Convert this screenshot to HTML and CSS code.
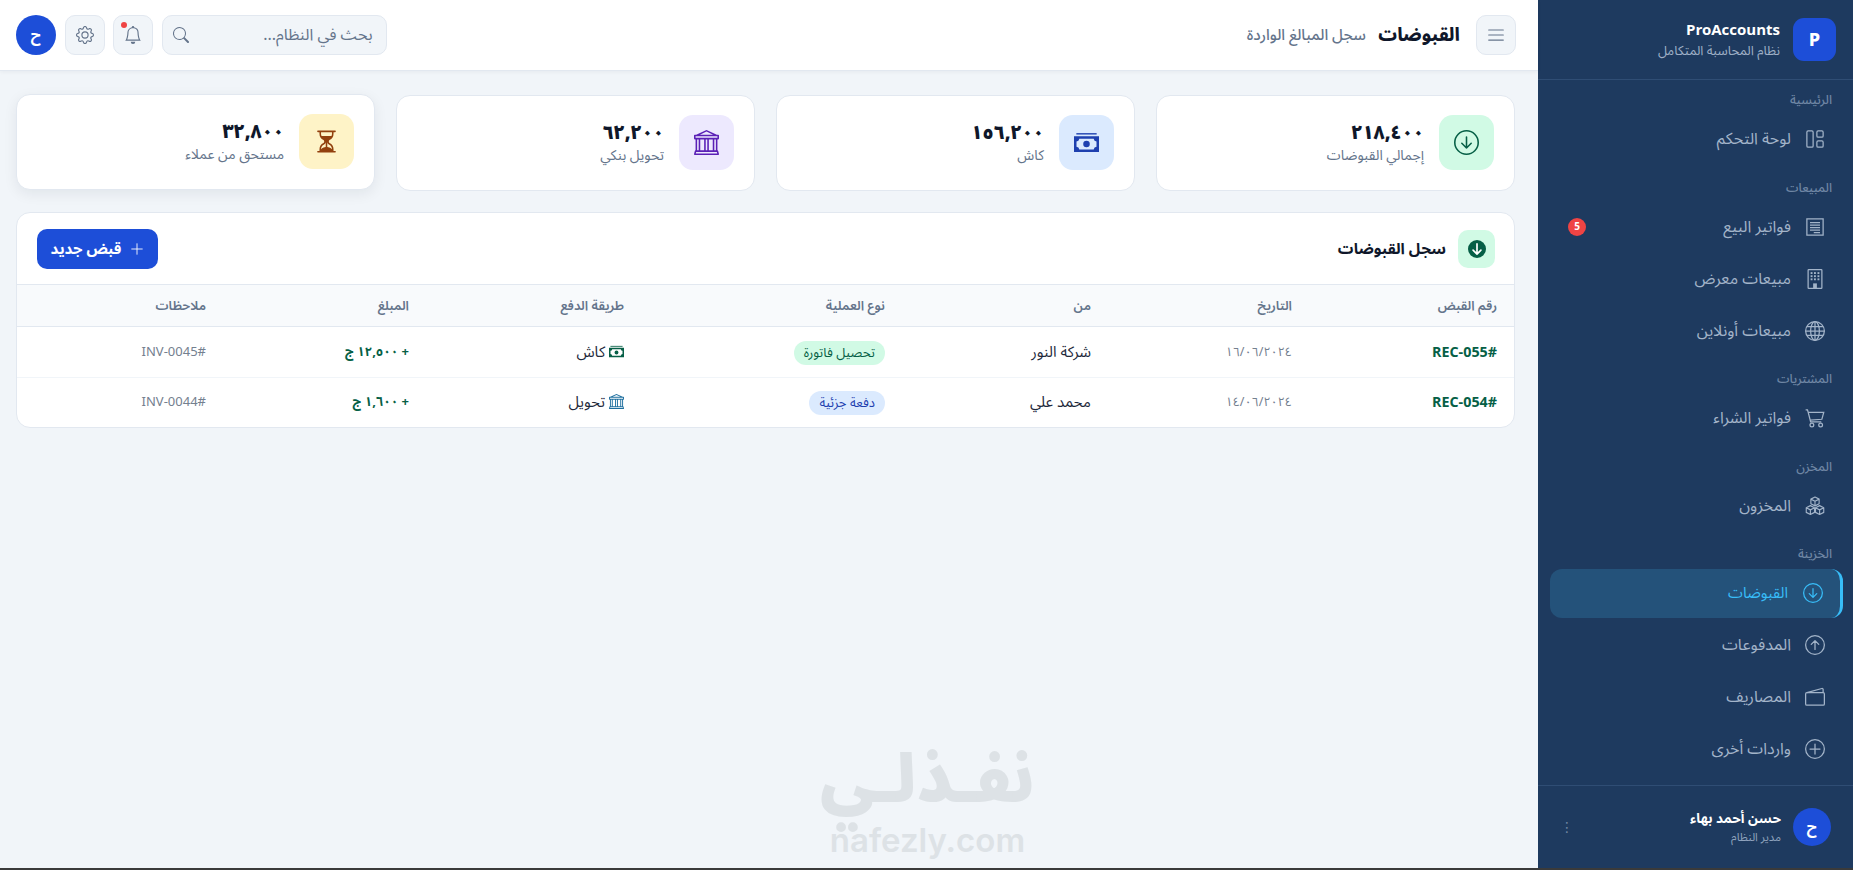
FILE: index.html
```html
<!DOCTYPE html>
<html lang="ar" dir="rtl">
<head>
<meta charset="utf-8">
<title>القبوضات</title>
<link rel="stylesheet" href="styles.css">
</head>
<body>
<svg class="sprite" xmlns="http://www.w3.org/2000/svg">
  <symbol id="i-grid" viewBox="0 0 16 16"><g fill="none" stroke="currentColor"><rect x="1.5" y="1.5" width="5" height="13" rx="1"/><rect x="9.5" y="1.5" width="5" height="5" rx="1"/><rect x="9.5" y="9.5" width="5" height="5" rx="1"/></g></symbol>
  <symbol id="i-receipt" viewBox="0 0 16 16"><g fill="none" stroke="currentColor"><path d="M1.5 1.5h13v13h-13z"/><path d="M4 4.5h8M4 6.5h8M4 8.5h8M4 10.5h8M7 12.5h5" stroke-width=".9"/></g></symbol>
  <symbol id="i-building" viewBox="0 0 16 16"><g fill="none" stroke="currentColor"><rect x="2.5" y=".5" width="11" height="15" rx=".5"/></g><g fill="currentColor"><rect x="4.5" y="2.5" width="1.5" height="1.5"/><rect x="7.2" y="2.5" width="1.5" height="1.5"/><rect x="10" y="2.5" width="1.5" height="1.5"/><rect x="4.5" y="5" width="1.5" height="1.5"/><rect x="7.2" y="5" width="1.5" height="1.5"/><rect x="10" y="5" width="1.5" height="1.5"/><rect x="4.5" y="7.5" width="1.5" height="1.5"/><rect x="7.2" y="7.5" width="1.5" height="1.5"/><rect x="10" y="7.5" width="1.5" height="1.5"/><rect x="6.5" y="11.5" width="3" height="4"/></g></symbol>
  <symbol id="i-globe" viewBox="0 0 16 16"><g fill="none" stroke="currentColor"><circle cx="8" cy="8" r="7.5"/><ellipse cx="8" cy="8" rx="3.5" ry="7.5"/><path d="M8 .5v15M.5 8h15M1.6 4.5h12.8M1.6 11.5h12.8"/></g></symbol>
  <symbol id="i-cart" viewBox="0 0 16 16"><g fill="none" stroke="currentColor"><path d="M.5 1.5H2l.6 2.2L4.5 11h8.5M2.6 3.5H15l-1.5 5.5-9.2.7"/><circle cx="5.5" cy="13.5" r="1.5"/><circle cx="12.5" cy="13.5" r="1.5"/></g></symbol>
  <symbol id="i-boxes" viewBox="0 0 16 16"><g fill="none" stroke="currentColor" stroke-width=".9" stroke-linejoin="round"><path d="M8 .8l3.3 1.7v3.7L8 7.9 4.7 6.2V2.5zM4.7 2.5L8 4.2l3.3-1.7M8 4.2v3.7"/><path d="M4.3 7.7l3.3 1.7v3.7l-3.3 1.7L1 13.1V9.4zM1 9.4l3.3 1.7 3.3-1.7M4.3 11.1v3.7"/><path d="M11.7 7.7L15 9.4v3.7l-3.3 1.7-3.3-1.7V9.4zM8.4 9.4l3.3 1.7L15 9.4M11.7 11.1v3.7"/></g></symbol>
  <symbol id="i-down" viewBox="0 0 16 16"><g fill="none" stroke="currentColor"><circle cx="8" cy="8" r="7.5"/><path d="M8 4.5v7M5 8.5l3 3 3-3" stroke-linecap="round" stroke-linejoin="round"/></g></symbol>
  <symbol id="i-up" viewBox="0 0 16 16"><g fill="none" stroke="currentColor"><circle cx="8" cy="8" r="7.5"/><path d="M8 11.5v-7M5 7.5l3-3 3 3" stroke-linecap="round" stroke-linejoin="round"/></g></symbol>
  <symbol id="i-wallet" viewBox="0 0 16 16"><g fill="none" stroke="currentColor" stroke-linejoin="round"><rect x=".5" y="4.5" width="15" height="10" rx="1"/><path d="M1.5 4.5L13.5 1.2c.5-.1 1 .2 1 .8v2.5"/></g></symbol>
  <symbol id="i-plusc" viewBox="0 0 16 16"><g fill="none" stroke="currentColor" stroke-linecap="round"><circle cx="8" cy="8" r="7.5"/><path d="M8 4v8M4 8h8"/></g></symbol>
  <symbol id="i-plus" viewBox="0 0 16 16"><path d="M8 2v12M2 8h12" fill="none" stroke="currentColor" stroke-linecap="round"/></symbol>
  <symbol id="i-list" viewBox="0 0 16 16"><path d="M1.5 3.5h13M1.5 8h13M1.5 12.5h13" fill="none" stroke="currentColor" stroke-linecap="round"/></symbol>
  <symbol id="i-search" viewBox="0 0 16 16"><path fill="currentColor" d="M11.742 10.344a6.5 6.5 0 1 0-1.397 1.398h-.001q.044.06.098.115l3.85 3.85a1 1 0 0 0 1.415-1.414l-3.85-3.85a1 1 0 0 0-.115-.1zM12 6.5a5.5 5.5 0 1 1-11 0 5.5 5.5 0 0 1 11 0"/></symbol>
  <symbol id="i-bell" viewBox="0 0 16 16"><path fill="currentColor" d="M8 16a2 2 0 0 0 2-2H6a2 2 0 0 0 2 2M8 1.918l-.797.161A4 4 0 0 0 4 6c0 .628-.134 2.197-.459 3.742-.16.767-.376 1.566-.663 2.258h10.244c-.287-.692-.502-1.49-.663-2.258C12.134 8.197 12 6.628 12 6a4 4 0 0 0-3.203-3.92zM14.22 12c.223.447.481.801.78 1H1c.299-.199.557-.553.78-1C2.68 10.2 3 6.88 3 6c0-2.42 1.72-4.44 4.005-4.901a1 1 0 1 1 1.99 0A5 5 0 0 1 13 6c0 .88.32 4.2 1.22 6"/></symbol>
  <symbol id="i-gear" viewBox="0 0 16 16"><path fill="currentColor" d="M8 4.754a3.246 3.246 0 1 0 0 6.492 3.246 3.246 0 0 0 0-6.492M5.754 8a2.246 2.246 0 1 1 4.492 0 2.246 2.246 0 0 1-4.492 0"/><path fill="currentColor" d="M9.796 1.343c-.527-1.79-3.065-1.79-3.592 0l-.094.319a.873.873 0 0 1-1.255.52l-.292-.16c-1.64-.892-3.433.902-2.54 2.541l.159.292a.873.873 0 0 1-.52 1.255l-.319.094c-1.79.527-1.79 3.065 0 3.592l.319.094a.873.873 0 0 1 .52 1.255l-.16.292c-.892 1.64.901 3.434 2.541 2.54l.292-.159a.873.873 0 0 1 1.255.52l.094.319c.527 1.79 3.065 1.79 3.592 0l.094-.319a.873.873 0 0 1 1.255-.52l.292.16c1.64.893 3.434-.902 2.54-2.541l-.159-.292a.873.873 0 0 1 .52-1.255l.319-.094c1.79-.527 1.79-3.065 0-3.592l-.319-.094a.873.873 0 0 1-.52-1.255l.16-.292c.893-1.64-.902-3.433-2.541-2.54l-.292.159a.873.873 0 0 1-1.255-.52zm-2.633.283c.246-.835 1.428-.835 1.674 0l.094.319a1.873 1.873 0 0 0 2.693 1.115l.291-.16c.764-.415 1.6.42 1.184 1.185l-.159.292a1.873 1.873 0 0 0 1.116 2.692l.318.094c.835.246.835 1.428 0 1.674l-.319.094a1.873 1.873 0 0 0-1.115 2.693l.16.291c.415.764-.42 1.6-1.185 1.184l-.291-.159a1.873 1.873 0 0 0-2.693 1.116l-.094.318c-.246.835-1.428.835-1.674 0l-.094-.319a1.873 1.873 0 0 0-2.692-1.115l-.292.16c-.764.415-1.6-.42-1.184-1.185l.159-.291A1.873 1.873 0 0 0 1.945 8.93l-.319-.094c-.835-.246-.835-1.428 0-1.674l.319-.094A1.873 1.873 0 0 0 3.06 4.377l-.16-.292c-.415-.764.42-1.6 1.185-1.184l.292.159a1.873 1.873 0 0 0 2.692-1.115z"/></symbol>
  <symbol id="i-bank" viewBox="0 0 16 16"><path fill="currentColor" d="m8 0 6.61 3h.89a.5.5 0 0 1 .5.5v2a.5.5 0 0 1-.5.5H15v7a.5.5 0 0 1 .485.38l.5 2a.498.498 0 0 1-.485.62H.5a.498.498 0 0 1-.485-.62l.5-2A.5.5 0 0 1 1 13V6H.5a.5.5 0 0 1-.5-.5v-2A.5.5 0 0 1 .5 3h.89zM3.777 3h8.447L8 1zM2 6v7h1V6zm2 0v7h2.5V6zm3.5 0v7h1V6zm2 0v7H12V6zM13 6v7h1V6zm2-1V4H1v1zm-.39 9H1.39l-.25 1h13.72z"/></symbol>
  <symbol id="i-cash" viewBox="0 0 16 16"><path fill="currentColor" d="M1.5 2h13v.9h-13z"/><path fill="currentColor" fill-rule="evenodd" d="M0 4h16v10H0zM1.6 7.3v3.4a2 2 0 0 1 1.8 1.7h9.2a2 2 0 0 1 1.8-1.7V7.3a2 2 0 0 1-1.8-1.7H3.4a2 2 0 0 1-1.8 1.700zM8 6.900a2.100 2.100 0 1 1 0 4.200 2.100 2.100 0 0 1 0-4.200z"/></symbol>
  <symbol id="i-hour" viewBox="0 0 16 16"><path fill="currentColor" d="M2.5 15a.5.5 0 1 1 0-1h1v-1a4.5 4.5 0 0 1 2.557-4.06c.29-.139.443-.377.443-.59v-.7c0-.213-.154-.451-.443-.59A4.5 4.5 0 0 1 3.5 3V2h-1a.5.5 0 0 1 0-1h11a.5.5 0 0 1 0 1h-1v1a4.5 4.5 0 0 1-2.557 4.06c-.29.139-.443.377-.443.59v.7c0 .213.154.451.443.59A4.5 4.5 0 0 1 12.5 13v1h1a.5.5 0 0 1 0 1zm2-13v1c0 .537.12 1.045.337 1.5h6.326c.216-.455.337-.963.337-1.5V2zm3 6.35c0 .701-.478 1.236-1.011 1.492A3.5 3.5 0 0 0 4.5 13s.866-1.299 3-1.48zm1 0v3.17c2.134.181 3 1.48 3 1.48a3.5 3.5 0 0 0-1.989-3.158C8.978 9.586 8.5 9.052 8.5 8.351z"/></symbol>
  <symbol id="i-arrow" viewBox="0 0 16 16"><path d="M8 3.5v9M4.5 9L8 12.5 11.500 9" fill="none" stroke="currentColor" stroke-width="1.5" stroke-linecap="round" stroke-linejoin="round"/></symbol>
</svg>

<div class="app">
  <aside class="sidebar">
    <div class="brand">
      <div class="brand-logo">P</div>
      <div class="brand-text">
        <div class="brand-name">ProAccounts</div>
        <div class="brand-sub">نظام المحاسبة المتكامل</div>
      </div>
    </div>
    <nav class="nav">
      <div class="nav-label">الرئيسية</div>
      <a class="nav-item"><svg class="nav-icon"><use href="#i-grid"/></svg><span>لوحة التحكم</span></a>
      <div class="nav-label">المبيعات</div>
      <a class="nav-item"><svg class="nav-icon"><use href="#i-receipt"/></svg><span>فواتير البيع</span><b class="nav-badge">5</b></a>
      <a class="nav-item"><svg class="nav-icon"><use href="#i-building"/></svg><span>مبيعات معرض</span></a>
      <a class="nav-item"><svg class="nav-icon"><use href="#i-globe"/></svg><span>مبيعات أونلاين</span></a>
      <div class="nav-label">المشتريات</div>
      <a class="nav-item"><svg class="nav-icon"><use href="#i-cart"/></svg><span>فواتير الشراء</span></a>
      <div class="nav-label">المخزن</div>
      <a class="nav-item"><svg class="nav-icon"><use href="#i-boxes"/></svg><span>المخزون</span></a>
      <div class="nav-label">الخزينة</div>
      <a class="nav-item active"><svg class="nav-icon"><use href="#i-down"/></svg><span>القبوضات</span></a>
      <a class="nav-item"><svg class="nav-icon"><use href="#i-up"/></svg><span>المدفوعات</span></a>
      <a class="nav-item"><svg class="nav-icon"><use href="#i-wallet"/></svg><span>المصاريف</span></a>
      <a class="nav-item"><svg class="nav-icon"><use href="#i-plusc"/></svg><span>واردات أخرى</span></a>
    </nav>
    <div class="user">
      <div class="user-avatar">ح</div>
      <div class="user-text">
        <div class="user-name">حسن أحمد بهاء</div>
        <div class="user-role">مدير النظام</div>
      </div>
      <div class="user-more">⋮</div>
    </div>
  </aside>

  <main class="main">
    <header class="topbar">
      <button class="tool-btn"><svg class="tool-icon"><use href="#i-list"/></svg></button>
      <h1 class="page-title">القبوضات</h1>
      <span class="page-sub">سجل المبالغ الواردة</span>
      <div class="top-tools">
        <div class="search"><span class="search-text">بحث في النظام...</span><svg class="search-icon"><use href="#i-search"/></svg></div>
        <button class="tool-btn bell"><svg class="tool-icon"><use href="#i-bell"/></svg></button>
        <button class="tool-btn"><svg class="tool-icon"><use href="#i-gear"/></svg></button>
        <div class="top-avatar">ح</div>
      </div>
    </header>

    <div class="content">
      <section class="stats">
        <div class="stat"><div class="stat-icon green"><svg><use href="#i-down"/></svg></div><div><div class="stat-value">٢١٨,٤٠٠</div><div class="stat-label">إجمالي القبوضات</div></div></div>
        <div class="stat"><div class="stat-icon blue"><svg><use href="#i-cash"/></svg></div><div><div class="stat-value">١٥٦,٢٠٠</div><div class="stat-label">كاش</div></div></div>
        <div class="stat"><div class="stat-icon purple"><svg><use href="#i-bank"/></svg></div><div><div class="stat-value">٦٢,٢٠٠</div><div class="stat-label">تحويل بنكي</div></div></div>
        <div class="stat raised"><div class="stat-icon amber"><svg><use href="#i-hour"/></svg></div><div><div class="stat-value">٣٢,٨٠٠</div><div class="stat-label">مستحق من عملاء</div></div></div>
      </section>

      <section class="panel">
        <div class="panel-head">
          <div class="panel-icon"><svg class="panel-dot"><use href="#i-arrow"/></svg></div>
          <h2 class="panel-title">سجل القبوضات</h2>
          <button class="new-btn"><svg><use href="#i-plus"/></svg>قبض جديد</button>
        </div>
        <table class="grid">
          <thead>
            <tr><th>رقم القبض</th><th>التاريخ</th><th>من</th><th>نوع العملية</th><th>طريقة الدفع</th><th>المبلغ</th><th>ملاحظات</th></tr>
          </thead>
          <tbody>
            <tr>
              <td class="ref">#REC-055</td><td class="muted date">١٦/٠٦/٢٠٢٤</td><td>شركة النور</td>
              <td><span class="tag tag-green">تحصيل فاتورة</span></td>
              <td><svg class="pay-icon cash"><use href="#i-cash"/></svg> كاش</td>
              <td class="amount">+ ١٢,٥٠٠ ج</td><td class="muted">#INV-0045</td>
            </tr>
            <tr>
              <td class="ref">#REC-054</td><td class="muted date">١٤/٠٦/٢٠٢٤</td><td>محمد علي</td>
              <td><span class="tag tag-blue">دفعة جزئية</span></td>
              <td><svg class="pay-icon bank"><use href="#i-bank"/></svg> تحويل</td>
              <td class="amount">+ ١,٦٠٠ ج</td><td class="muted">#INV-0044</td>
            </tr>
          </tbody>
        </table>
      </section>
    </div>

    <div class="watermark">
      <div class="wm-ar">نفـذلـي</div>
      <div class="wm-en">nafezly.com</div>
    </div>
  </main>
</div>
</body>
</html>
```

FILE: styles.css
```css
* { box-sizing: border-box; }
html, body { height: 100%; margin: 0; }
body {
  font-family: "Noto Sans Arabic", "Cairo", "Noto Sans", "DejaVu Sans", sans-serif;
  background: #f1f5f9;
  color: #0f172a;
  border-bottom: 2px solid #3a3a3a;
  overflow: hidden;
}
.sprite { display: none; }
.app { display: flex; height: 100%; }

/* Sidebar */
.sidebar {
  width: 315px; flex: none;
  background: #1e3a5f;
  display: flex; flex-direction: column;
  color: #fff;
}
.brand {
  height: 80px; flex: none;
  padding: 0 17px;
  display: flex; align-items: center; gap: 13px;
  border-bottom: 1px solid #2f4d74;
}
.brand-logo {
  width: 43px; height: 43px; border-radius: 11px;
  background: #1d4ed8;
  display: flex; align-items: center; justify-content: center;
  font-weight: 800; font-size: 18px;
}
.brand-name { font-size: 15px; font-weight: 700; line-height: 20px; direction: ltr; text-align: right; }
.brand-sub { font-size: 13px; line-height: 18px; color: #9fb0c6; margin-top: 2px; }

.nav { flex: 1; padding: 0 10px 0 12px; display: flex; flex-direction: column; }
.nav-label {
  font-size: 12.5px; font-weight: 500; color: #6f86a4; line-height: 14px;
  padding: 0 11px 0 0; margin-top: 14px; height: 21.5px;
}
.nav-label:first-child { margin-top: 13px; }
.nav-item {
  height: 49px; margin-bottom: 3px; flex: none;
  display: flex; align-items: center; gap: 14px;
  padding: 0 18px 0 18px;
  font-size: 16px; color: #a3b4c9;
  border-radius: 12px;
}
.nav-icon { width: 20px; height: 20px; flex: none; }
.nav-badge {
  margin-right: auto;
  width: 18px; height: 18px; border-radius: 50%;
  background: #ef4444; color: #fff;
  font-size: 10px; font-weight: 700;
  display: flex; align-items: center; justify-content: center;
}
.nav-item.active {
  background: #24527a; color: #38bdf8;
  border-right: 3px solid #38bdf8;
  padding-right: 17px; gap: 15px;
  font-size: 15px;
}
.user {
  height: 83px; flex: none;
  border-top: 1px solid #2f4d74;
  padding: 0 22px 0 22px;
  display: flex; align-items: center; gap: 12px;
}
.user-avatar {
  width: 38px; height: 38px; border-radius: 50%;
  background: #1d4ed8; flex: none;
  display: flex; align-items: center; justify-content: center;
  font-weight: 700; font-size: 15px;
}
.user-name { font-size: 13.5px; font-weight: 700; line-height: 21px; }
.user-role { font-size: 11.5px; color: #8fa3bd; line-height: 17px; }
.user-more { margin-right: auto; color: #6f86a4; font-size: 14px; }

/* Main */
.main { flex: 1; min-width: 0; position: relative; }
.topbar {
  height: 71px;
  background: #fff;
  border-bottom: 1px solid #e2e8f0;
  box-shadow: 0 1px 4px rgba(15, 23, 42, .05);
  padding: 0 22px 0 16px;
  display: flex; align-items: center;
}
.tool-btn {
  width: 40px; height: 40px; padding: 0;
  background: #f1f5f9; border: 1px solid #e2e8f0; border-radius: 10px;
  color: #64748b;
  display: flex; align-items: center; justify-content: center;
  position: relative;
}
.tool-icon { width: 18px; height: 18px; }
.bell::after {
  content: ""; position: absolute;
  top: 6px; left: 7px; width: 6px; height: 6px;
  border-radius: 50%; background: #ef4444;
}
.page-title { font-size: 18.5px; font-weight: 800; margin: 0 16px 0 0; }
.page-sub { font-size: 15.2px; font-weight: 500; color: #64748b; margin-right: 12px; }
.top-tools { margin-right: auto; display: flex; align-items: center; gap: 8.5px; }
.search {
  width: 225px; height: 40px;
  background: #f1f5f9; border: 1px solid #e2e8f0; border-radius: 10px;
  padding: 0 13px 0 10px;
  display: flex; align-items: center; justify-content: space-between;
  font-size: 16px; color: #64748b;
}
.search-icon { width: 16px; height: 16px; }
.top-avatar {
  width: 40px; height: 40px; border-radius: 50%;
  background: #1d4ed8; color: #fff;
  display: flex; align-items: center; justify-content: center;
  font-weight: 700; font-size: 15px;
}

.content { padding: 24px 23px 0 16px; }
.stats { display: grid; grid-template-columns: repeat(4, 1fr); gap: 21px; }
.stat {
  height: 95.5px;
  background: #fff; border: 1px solid #e2e8f0; border-radius: 14px;
  padding: 0 20px;
  display: flex; align-items: center; gap: 15px;
}
.stat.raised { box-shadow: 0 4px 14px rgba(15, 23, 42, .07); transform: translateY(-1px); }
.stat-icon {
  width: 55px; height: 55px; border-radius: 14px; flex: none;
  display: flex; align-items: center; justify-content: center;
}
.stat-icon svg { width: 25px; height: 25px; }
.green { background: #d1fae5; color: #065f46; }
.blue { background: #dbeafe; color: #1e40af; }
.purple { background: #ede9fe; color: #5b21b6; }
.amber { background: #fef3c7; color: #92400e; }
.stat-value { font-size: 19px; font-weight: 900; line-height: 26px; }
.stat-label { font-size: 14px; color: #64748b; line-height: 20px; }

.panel {
  margin-top: 21.5px;
  background: #fff; border: 1px solid #e2e8f0; border-radius: 14px;
  overflow: hidden;
}
.panel-head {
  height: 71px; padding: 0 19px 0 20px;
  display: flex; align-items: center; gap: 12px;
}
.panel-icon {
  width: 37px; height: 38px; border-radius: 10px;
  background: #d1fae5; color: #fff;
  display: flex; align-items: center; justify-content: center;
}
.panel-dot {
  width: 18px; height: 18px; border-radius: 50%;
  background: #065f46; display: block;
}
.panel-title { font-size: 15.5px; font-weight: 700; margin: 0; }
.new-btn {
  margin-right: auto;
  height: 40px; width: 121px;
  background: #1d4ed8; color: #fff; border: 0; border-radius: 10px;
  font: inherit; font-size: 15px; font-weight: 700;
  display: flex; align-items: center; justify-content: center; gap: 9px;
}
.new-btn svg { width: 14px; height: 14px; }

.grid { width: 100%; border-collapse: collapse; table-layout: fixed; }
.grid th {
  height: 42px; padding: 0 17px;
  text-align: right; font-size: 13px; font-weight: 600; color: #64748b;
  background: #f8fafc;
  border-top: 1px solid #e2e8f0; border-bottom: 1px solid #e2e8f0;
}
.grid td {
  height: 51px; padding: 0 17px;
  font-size: 15px; color: #1e293b;
  border-bottom: 1px solid #f1f5f9;
}
.grid tr:last-child td { border-bottom: 0; height: 49px; }
.grid th:nth-child(1) { width: 205px; }
.grid th:nth-child(2) { width: 201px; }
.grid th:nth-child(3) { width: 206px; }
.grid th:nth-child(4) { width: 261px; }
.grid th:nth-child(5) { width: 215px; }
.grid th:nth-child(6) { width: 203px; }
.grid .ref { font-weight: 700; color: #065f46; font-size: 14.3px; }
.grid .muted { color: #74808f; font-size: 13px; }
.grid .date { font-size: 12.5px; }
.grid .amount { font-weight: 700; color: #065f46; font-size: 13px; }
.pay-icon { width: 15px; height: 15px; vertical-align: -2px; }
.pay-icon.cash { color: #065f46; }
.pay-icon.bank { color: #1e6f9f; }
.tag {
  display: inline-block; height: 24px; line-height: 24px;
  padding: 0 10px; border-radius: 12px; font-size: 13px;
}
.tag-green { background: #d1fae5; color: #065f46; }
.tag-blue { background: #dbeafe; color: #1e40af; }

.watermark {
  position: absolute; left: 812px; top: 742px; width: 231px;
  text-align: center; color: #dde2e6; pointer-events: none;
}
.wm-ar { font-size: 66px; font-weight: 900; line-height: 78px; white-space: nowrap; }
.wm-en { font-size: 33px; font-weight: 600; line-height: 40px; direction: ltr; font-family: "Inter", sans-serif; }
```
